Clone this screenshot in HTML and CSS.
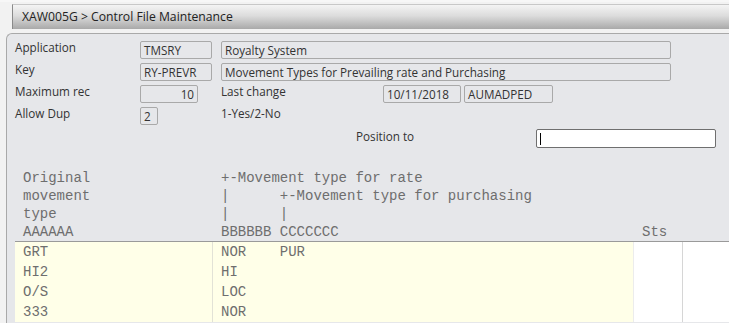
FILE: index.html
```html
<!DOCTYPE html>
<html>
<head>
    <title>XAW005G - Control File Maintenance</title>
    <meta name="viewport" content="width=device-width, initial-scale=1">
    <link rel="stylesheet" href="styles.css">
</head>
<body>
    <div class="title-bar">XAW005G &gt; Control File Maintenance</div>

    <div class="panel">
        <div class="form-row">
            <label>Application</label>
            <div class="field w-code">TMSRY</div>
            <div class="field w-desc">Royalty System</div>
        </div>
        <div class="form-row">
            <label>Key</label>
            <div class="field w-code">RY-PREVR</div>
            <div class="field w-desc">Movement Types for Prevailing rate and Purchasing</div>
        </div>
        <div class="form-row">
            <label>Maximum rec</label>
            <div class="field w-num">10</div>
            <span class="note w-last">Last change</span>
            <div class="field w-date">10/11/2018</div>
            <div class="field w-user">AUMADPED</div>
        </div>
        <div class="form-row">
            <label>Allow Dup</label>
            <div class="field w-dup">2</div>
            <span class="note">1-Yes/2-No</span>
        </div>
        <div class="position-row">
            <span class="note w-pos">Position to</span>
            <div class="pos-input"><span class="caret"></span></div>
        </div>

        <div class="list-head">
            <pre class="c1">Original
movement
type
AAAAAA</pre>
            <pre class="c2">+-Movement type for rate
|      +-Movement type for purchasing
|      |
BBBBBB CCCCCCC</pre>
            <pre class="c3">



Sts</pre>
        </div>

        <div class="grid">
            <div class="grid-row">
                <div class="cell c1">GRT</div>
                <div class="cell c2">NOR    PUR</div>
                <div class="cell c3"></div>
                <div class="cell c4"></div>
            </div>
            <div class="grid-row">
                <div class="cell c1">HI2</div>
                <div class="cell c2">HI</div>
                <div class="cell c3"></div>
                <div class="cell c4"></div>
            </div>
            <div class="grid-row">
                <div class="cell c1">O/S</div>
                <div class="cell c2">LOC</div>
                <div class="cell c3"></div>
                <div class="cell c4"></div>
            </div>
            <div class="grid-row">
                <div class="cell c1">333</div>
                <div class="cell c2">NOR</div>
                <div class="cell c3"></div>
                <div class="cell c4"></div>
            </div>
        </div>
    </div>
</body>
</html>
```

FILE: styles.css
```css
* {
    margin: 0;
    padding: 0;
    box-sizing: border-box;
}

body {
    font-family: 'Open Sans', 'Noto Sans', Arial, sans-serif;
    font-size: 11.7px;
    color: #333;
    background: #f2f2f2;
    border-top: 2px solid #f7f7f7;
    overflow: hidden;
}

.title-bar {
    margin: 2px 0 0 12px;
    height: 25px;
    line-height: 24px;
    padding-left: 9px;
    font-size: 12.2px;
    color: #222;
    background: linear-gradient(#f4f4f4, #dcdcdc 45%, #a9a9a9);
    border-left: 1px solid #8a8a8a;
    border-top: 1px solid #c8c8c8;
}

.panel {
    margin: 4px 0 0 6px;
    height: 300px;
    padding: 7px 0 0 8px;
    background: #e6e7ea;
    border: 1px solid #a9a9a9;
    border-right: none;
    border-bottom: none;
    border-top-left-radius: 6px;
}

.form-row {
    display: flex;
    align-items: center;
    height: 18px;
    margin-bottom: 4px;
}

.form-row label {
    width: 125px;
    align-self: flex-start;
    line-height: 13px;
}

.field {
    height: 18px;
    line-height: 16px;
    padding: 0 3px;
    border: 1px solid #a9a9a9;
    border-radius: 2px;
    background: #e6e7ea;
    white-space: nowrap;
    overflow: hidden;
}

.w-code { width: 72px; margin-right: 9px; }
.w-desc { width: 450px; }
.w-num { width: 58px; text-align: right; margin-right: 23px; }
.w-dup { width: 18px; margin-right: 63px; }
.w-date { width: 78px; margin-right: 3px; }
.w-user { width: 89px; }

.note {
    align-self: flex-start;
    line-height: 13px;
}

.w-last { width: 162px; }

.position-row {
    display: flex;
    align-items: center;
    height: 19px;
    margin-top: 3px;
    padding-left: 341px;
}

.w-pos {
    width: 180px;
    align-self: center;
    margin-top: -4px;
}

.pos-input {
    width: 180px;
    height: 19px;
    background: #fff;
    border: 1px solid #6f6f6f;
    border-radius: 2px;
    padding: 3px 0 0 3px;
}

.caret {
    display: block;
    width: 1px;
    height: 12px;
    background: #000;
}

pre, .cell {
    font-family: 'Liberation Mono', 'Courier New', monospace;
    font-size: 14px;
    color: #6e6e6e;
}

.list-head {
    display: flex;
    margin-top: 21px;
    line-height: 18px;
}

.list-head pre {
    padding-left: 8px;
}

.c1 { width: 198px; }
.c2 { width: 421px; }
.c3 { width: 49px; }
.c4 { flex: 1; }

.grid {
    border-top: 1px solid #9a9a9a;
    background: #fff;
}

.grid-row {
    display: flex;
    height: 20px;
}

.cell {
    line-height: 20px;
    padding-left: 8px;
    white-space: pre;
}

.grid .c1 {
    background: #ffffe8;
    border-right: 1px solid #e2e2d6;
}

.grid .c2 {
    background: #ffffe8;
    border-right: 1px solid #ececec;
}

.grid .c3 {
    border-right: 1px solid #d6d6d6;
}
```
